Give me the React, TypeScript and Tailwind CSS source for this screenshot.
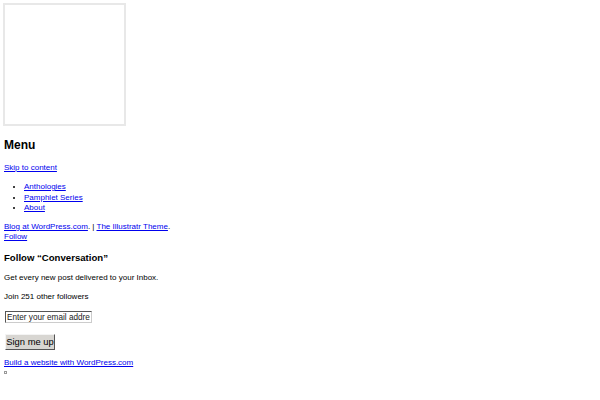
export default function App() {
  const link = "text-[#0000ee] underline";
  return (
    <div className="min-h-[400px] bg-white text-black" style={{ fontFamily: '"Liberation Sans", Arial, sans-serif' }}>
      <div className="pl-[4px] pt-[3px]">
        <div className="ml-[-1px] h-[123px] w-[123px] border-2 border-[#e8e8e8]" />

        <h2 className="mt-[12px] h-[14px] text-[12px] font-bold leading-[14px]">Menu</h2>

        <a href="#" className={`mt-[11px] block h-[10px] text-[8px] leading-[10px] ${link}`}>
          Skip to content
        </a>

        <ul className="mt-[9px] list-disc pl-[20px] text-[8px] leading-[10.5px]">
          <li>
            <a href="#" className={link}>Anthologies</a>
          </li>
          <li>
            <a href="#" className={link}>Pamphlet Series</a>
          </li>
          <li>
            <a href="#" className={link}>About</a>
          </li>
        </ul>

        <div className="mt-[8.5px] text-[8px] leading-[10px]">
          <a href="#" className={link}>Blog at WordPress.com</a>. |{" "}
          <a href="#" className={link}>The Illustratr Theme</a>.
          <br />
          <a href="#" className={link}>Follow</a>
        </div>

        <h3 className="mt-[10px] h-[12px] text-[9.6px] font-bold leading-[12px]">Follow “Conversation”</h3>

        <p className="mt-[9px] text-[8px] leading-[10px]">Get every new post delivered to your Inbox.</p>
        <p className="mt-[9px] text-[8px] leading-[10px]">Join 251 other followers</p>

        <input
          type="text"
          placeholder="Enter your email address"
          className="mt-[9px] ml-[1px] block h-[12px] w-[87px] border border-[#555] border-r-[#ccc] border-b-[#ccc] px-[1px] text-[8.2px] leading-[10px] placeholder:text-[#222]"
        />

        <button className="mt-[11px] ml-[1px] block h-[16px] w-[50px] whitespace-nowrap border border-[#f4f4f4] border-r-[#555] border-b-[#555] bg-[#d8d6d2] px-0 text-[9.4px] leading-[14px]">
          Sign me up
        </button>

        <a href="#" className={`mt-[8px] block text-[8px] leading-[10px] ${link}`}>
          Build a website with WordPress.com
        </a>

        <div className="mt-[3px] h-[3px] w-[3px] border border-[#999]" />
      </div>
    </div>
  );
}
